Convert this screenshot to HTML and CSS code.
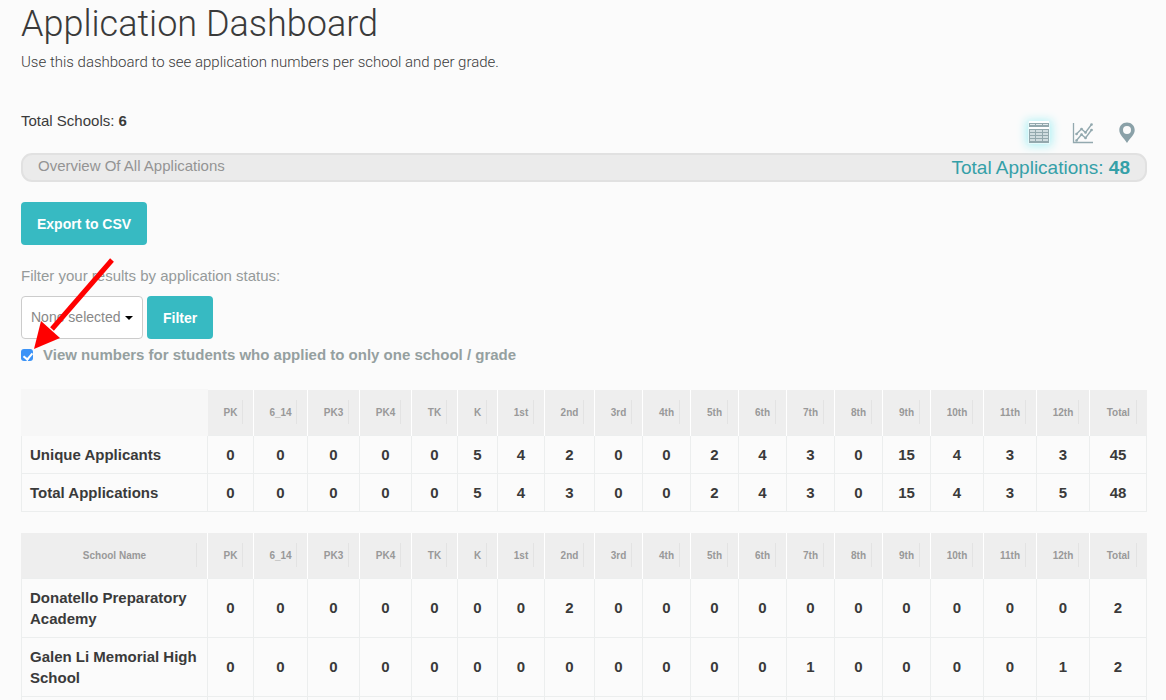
FILE: index.html
```html
<!doctype html>
<html lang="en">

<head>
  <meta charset="utf-8">
  <title>Application Dashboard</title>
  <link rel="stylesheet" href="styles.css">
</head>

<body>
  <div class="page">

    <h1>Application Dashboard</h1>
    <p class="intro">Use this dashboard to see application numbers per school and per grade.</p>

    <div class="summary">
      <p class="schools">Total Schools: <b>6</b></p>
      <div class="views">
        <a href="#" class="view active" aria-label="Table view">
          <svg width="22" height="22" viewBox="0 0 22 22">
            <rect x="1" y="-1" width="20" height="22" fill="#fff"/>
            <path fill="#93a8ad" d="M1 1h20v4H1zM1 7h20v14H1z"/>
            <path stroke="#e3ebed" d="M2 2.500h5M8 2.500h6M15 2.500h5"/>
            <path stroke="#d0dcdf" stroke-width="2" d="M2 9h5M8 9h6M15 9h5M2 12h5M8 12h6M15 12h5M2 15h5M8 15h6M15 15h5M2 18h5M8 18h6M15 18h5"/>
          </svg>
        </a>
        <a href="#" class="view" aria-label="Chart view">
          <svg width="22" height="22" viewBox="0 0 22 22" fill="none" stroke="#93a9af">
            <path stroke-width="1.300" d="M1.500 1v19.500H21"/>
            <path stroke-width="1.400" d="M4.500 12l5-5 4 3.500 6-8M4.500 18.500l5-6 4 3.500 6-8"/>
            <path stroke-width="2.600" stroke-linecap="round" d="M4.500 12h.1M9.500 7h.1M13.500 10.500h.1M19.500 2.500h.1M4.500 18.500h.1M9.500 12.500h.1M13.500 16h.1M19.500 8h.1"/>
          </svg>
        </a>
        <a href="#" class="view" aria-label="Map view">
          <svg width="22" height="22" viewBox="0 0 22 22">
            <path fill="#8aa1a8" fill-rule="evenodd" d="M11 .5c4.500 0 7.700 3.300 7.700 7.500 0 4.800-4.200 7.500-7.700 13-3.500-5.500-7.700-8.200-7.700-13C3.300 3.800 6.500.5 11 .5zM11 4a4 4 0 1 0 0 8 4 4 0 0 0 0-8z"/>
          </svg>
        </a>
      </div>
    </div>

    <div class="overview">
      <span class="overview-title">Overview Of All Applications</span>
      <span class="overview-total">Total Applications: <b>48</b></span>
    </div>

    <button type="button" class="btn">Export to CSV</button>

    <form class="filters">
      <label class="filter-label" for="status">Filter your results by application status:</label>
      <div class="filter-row">
        <div class="select">
          <select id="status">
            <option>None selected</option>
          </select>
        </div>
        <button type="button" class="btn">Filter</button>
      </div>
      <div class="check-row">
        <input type="checkbox" id="only-one" checked>
        <label for="only-one">View numbers for students who applied to only one school / grade</label>
      </div>
      <svg class="arrow" width="90" height="100" viewBox="0 0 90 100">
        <path stroke="#f00" stroke-width="5" d="M82 4L22 73"/>
        <path fill="#f00" d="M4 93l7-28 19 17z"/>
      </svg>
    </form>

    <table class="grades">
      <colgroup>
        <col><col class="w46"><col class="w54"><col class="w52"><col class="w52"><col class="w46"><col class="w40"><col class="w47"><col class="w50">
        <col class="w48" span="7">
        <col class="w53" span="3">
        <col class="w57">
      </colgroup>
      <thead>
        <tr>
          <td class="empty"></td>
          <th><span>PK</span></th>
          <th><span>6_14</span></th>
          <th><span>PK3</span></th>
          <th><span>PK4</span></th>
          <th><span>TK</span></th>
          <th><span>K</span></th>
          <th><span>1st</span></th>
          <th><span>2nd</span></th>
          <th><span>3rd</span></th>
          <th><span>4th</span></th>
          <th><span>5th</span></th>
          <th><span>6th</span></th>
          <th><span>7th</span></th>
          <th><span>8th</span></th>
          <th><span>9th</span></th>
          <th><span>10th</span></th>
          <th><span>11th</span></th>
          <th><span>12th</span></th>
          <th><span>Total</span></th>
        </tr>
      </thead>
      <tbody>
        <tr>
          <td class="name">Unique Applicants</td>
          <td>0</td><td>0</td><td>0</td><td>0</td><td>0</td><td>5</td><td>4</td><td>2</td><td>0</td><td>0</td>
          <td>2</td><td>4</td><td>3</td><td>0</td><td>15</td><td>4</td><td>3</td><td>3</td><td>45</td>
        </tr>
        <tr>
          <td class="name">Total Applications</td>
          <td>0</td><td>0</td><td>0</td><td>0</td><td>0</td><td>5</td><td>4</td><td>3</td><td>0</td><td>0</td>
          <td>2</td><td>4</td><td>3</td><td>0</td><td>15</td><td>4</td><td>3</td><td>5</td><td>48</td>
        </tr>
      </tbody>
    </table>

    <table class="grades">
      <colgroup>
        <col><col class="w46"><col class="w54"><col class="w52"><col class="w52"><col class="w46"><col class="w40"><col class="w47"><col class="w50">
        <col class="w48" span="7">
        <col class="w53" span="3">
        <col class="w57">
      </colgroup>
      <thead>
        <tr>
          <th><span>School Name</span></th>
          <th><span>PK</span></th>
          <th><span>6_14</span></th>
          <th><span>PK3</span></th>
          <th><span>PK4</span></th>
          <th><span>TK</span></th>
          <th><span>K</span></th>
          <th><span>1st</span></th>
          <th><span>2nd</span></th>
          <th><span>3rd</span></th>
          <th><span>4th</span></th>
          <th><span>5th</span></th>
          <th><span>6th</span></th>
          <th><span>7th</span></th>
          <th><span>8th</span></th>
          <th><span>9th</span></th>
          <th><span>10th</span></th>
          <th><span>11th</span></th>
          <th><span>12th</span></th>
          <th><span>Total</span></th>
        </tr>
      </thead>
      <tbody>
        <tr>
          <td class="name">Donatello Preparatory Academy</td>
          <td>0</td><td>0</td><td>0</td><td>0</td><td>0</td><td>0</td><td>0</td><td>2</td><td>0</td><td>0</td>
          <td>0</td><td>0</td><td>0</td><td>0</td><td>0</td><td>0</td><td>0</td><td>0</td><td>2</td>
        </tr>
        <tr>
          <td class="name">Galen Li Memorial High School</td>
          <td>0</td><td>0</td><td>0</td><td>0</td><td>0</td><td>0</td><td>0</td><td>0</td><td>0</td><td>0</td>
          <td>0</td><td>0</td><td>1</td><td>0</td><td>0</td><td>0</td><td>0</td><td>1</td><td>2</td>
        </tr>
        <tr>
          <td class="name"></td>
          <td></td><td></td><td></td><td></td><td></td><td></td><td></td><td></td><td></td><td></td>
          <td></td><td></td><td></td><td></td><td></td><td></td><td></td><td></td><td></td>
        </tr>
      </tbody>
    </table>

  </div>
</body>

</html>
```
FILE: styles.css
```css
* {
  box-sizing: border-box;
}

body {
  margin: 0;
  height: 100vh;
  overflow: hidden;
  background: #fbfbfb;
  color: #3a3a3a;
  font: 15px/21px "Liberation Sans", Arial, sans-serif;
}

.page {
  padding: 1px 19px 0 21px;
}

h1 {
  margin: 0;
  font: 300 36px/46px Roboto, "Liberation Sans", sans-serif;
}

.intro {
  margin: 5px 0 0;
  font: 300 15px/21px Roboto, "Liberation Sans", sans-serif;
}

/* total schools + view icons */
.summary {
  display: flex;
  justify-content: space-between;
  align-items: flex-end;
  margin-top: 37px;
  height: 43px;
}

.schools {
  margin: 0;
  align-self: flex-start;
}

.views {
  display: flex;
  gap: 22px;
  padding: 0 9px 9px 0;
}

.view {
  display: block;
  height: 22px;
}

.view svg {
  display: block;
  overflow: visible;
}

.view.active {
  background: #e4fafb;
  box-shadow: 0 0 10px 2px #b0f0f4;
}

/* grey bar */
.overview {
  display: flex;
  justify-content: space-between;
  height: 29px;
  padding: 0 15px;
  background: #ebebeb;
  border: 2px solid #e1e1e1;
  border-radius: 11px;
}

.overview-title {
  color: #949494;
}

.overview-total {
  color: #35a0a8;
  font-size: 19px;
  line-height: 26px;
}

.btn {
  display: block;
  height: 43px;
  padding: 2px 16px 0;
  border: 0;
  border-radius: 4px;
  background: #37bac2;
  color: #fff;
  font: bold 14px/21px "Liberation Sans", Arial, sans-serif;
}

.overview + .btn {
  margin-top: 20px;
}

/* filters */
.filters {
  position: relative;
  margin-top: 20px;
  color: #959a9a;
}

.filter-label {
  display: block;
}

.filter-row {
  display: flex;
  gap: 4px;
  margin-top: 10px;
}

.select {
  position: relative;
}

.select::after {
  content: "";
  position: absolute;
  right: 10px;
  top: 20px;
  border: 4px solid transparent;
  border-top-color: #000;
  border-bottom: 0;
}

select {
  appearance: none;
  width: 122px;
  height: 43px;
  padding: 0 9px;
  border: 1px solid #ccc;
  border-radius: 4px;
  background: #fff;
  color: #888;
  font: 14px/21px "Liberation Sans", Arial, sans-serif;
}

.check-row {
  display: flex;
  align-items: center;
  gap: 10px;
  margin-top: 5px;
  color: #95a0a0;
  font-weight: bold;
}

.check-row input {
  appearance: none;
  position: relative;
  width: 12px;
  height: 12px;
  margin: 0;
  border-radius: 3px;
  background: #3b93f7;
}

.check-row input:checked::after {
  content: "";
  position: absolute;
  left: 4px;
  top: 2px;
  width: 4px;
  height: 7px;
  border: solid #fff;
  border-width: 0 2px 2px 0;
  transform: rotate(40deg);
}

.arrow {
  position: absolute;
  left: 9px;
  top: -9px;
}

/* tables */
.grades {
  width: 100%;
  margin-top: 21px;
  table-layout: fixed;
  border-collapse: collapse;
  font-weight: bold;
  text-align: center;
}

.filters + .grades {
  margin-top: 24px;
}

.w40 { width: 40px; }
.w46 { width: 46px; }
.w47 { width: 47px; }
.w48 { width: 48px; }
.w50 { width: 50px; }
.w52 { width: 52px; }
.w53 { width: 53px; }
.w54 { width: 54px; }
.w57 { width: 57px; }

.grades td {
  padding: 8px;
  border: 1px solid #eceeee;
}

.grades tbody td {
  padding: 8px 0;
}

.grades tbody .name {
  padding: 8px;
  text-align: left;
}

.grades th {
  height: 45px;
  padding: 0 10px;
  border-left: 1px solid #fff;
  background: #eee;
  color: #999;
  font-size: 10px;
}

.grades th:first-child {
  border-left-color: #eee;
}

.grades th span {
  display: block;
  padding-top: 2px;
  border: solid transparent;
  border-width: 0 1px;
  border-right-color: #e3e3e3;
  line-height: 22px;
}

.grades .empty {
  height: 46px;
  border-color: #f7f7f7;
  background: #f7f7f7;
}
```
